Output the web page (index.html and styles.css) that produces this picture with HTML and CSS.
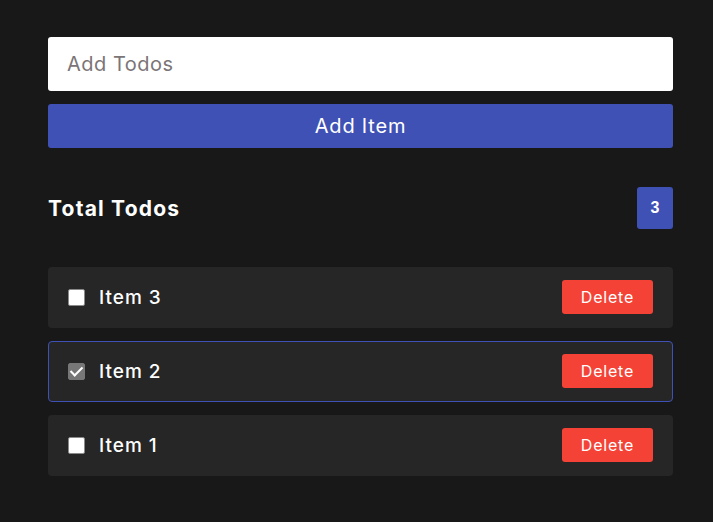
FILE: index.html
```html
<!DOCTYPE html>
<html>
<head>
<meta charset="utf-8">
<link rel="stylesheet" href="styles.css">
</head>
<body>
<main class="app">
  <input class="todo-input" type="text" placeholder="Add Todos">
  <button class="add-btn">Add Item</button>
  <div class="summary">
    <h2 class="summary-title">Total Todos</h2>
    <span class="badge">3</span>
  </div>
  <ul class="list">
    <li class="item">
      <label class="item-label"><input type="checkbox" class="check"><span>Item 3</span></label>
      <button class="del-btn">Delete</button>
    </li>
    <li class="item item-done">
      <label class="item-label"><input type="checkbox" class="check" checked><span>Item 2</span></label>
      <button class="del-btn">Delete</button>
    </li>
    <li class="item">
      <label class="item-label"><input type="checkbox" class="check"><span>Item 1</span></label>
      <button class="del-btn">Delete</button>
    </li>
  </ul>
</main>
</body>
</html>
```
FILE: styles.css
```css
* { box-sizing: border-box; }
html, body { margin: 0; padding: 0; background: #181818; }
body { font-family: "Inter", "Open Sans", sans-serif; color: #fff; }
.app {
  width: 625px;
  margin: 0 0 0 48px;
  padding-top: 37px;
  display: flex;
  flex-direction: column;
}
.todo-input {
  height: 54px;
  border: none;
  border-radius: 3px;
  background: #fff;
  padding: 0 19px;
  font-family: inherit;
  font-size: 20px;
  letter-spacing: 0.5px;
  color: #333;
  outline: none;
}
.todo-input::placeholder { color: #7b7577; }
.add-btn {
  margin-top: 13px;
  height: 44px;
  border: none;
  border-radius: 3px;
  background: #3f51b5;
  color: #fff;
  font-family: inherit;
  font-size: 20px;
  letter-spacing: 0.8px;
}
.summary {
  margin-top: 39px;
  display: flex;
  align-items: center;
  justify-content: space-between;
}
.summary-title { margin: 0; font-size: 21px; font-weight: 700; letter-spacing: 1.2px; }
.badge {
  width: 36px;
  height: 42px;
  border-radius: 3px;
  background: #3f51b5;
  display: flex;
  align-items: center;
  justify-content: center;
  font-family: "Liberation Sans", Arial, sans-serif;
  font-weight: 700;
  font-size: 16px;
}
.list {
  list-style: none;
  margin: 38px 0 0;
  padding: 0;
  display: flex;
  flex-direction: column;
  gap: 13.5px;
}
.item {
  height: 60.5px;
  background: #262626;
  border: 1px solid transparent;
  border-radius: 4px;
  display: flex;
  align-items: center;
  justify-content: space-between;
  padding: 0 19px 0 19px;
}
.item-done { border-color: #3f51b5; }
.item-label { display: flex; align-items: center; gap: 14px; font-size: 19px; font-weight: 500; letter-spacing: 1px; }
.check {
  appearance: none;
  -webkit-appearance: none;
  margin: 0;
  width: 17px;
  height: 17px;
  border-radius: 2px;
  background: #fff;
  border: 1px solid #8a8a8a;
  display: grid;
  place-items: center;
}
.check:checked { background: #777; border-color: #777; }
.check:checked::after {
  content: "";
  width: 5px;
  height: 10px;
  border: solid #fff;
  border-width: 0 2.5px 2.5px 0;
  transform: translate(0, -1px) rotate(45deg);
}
.del-btn {
  width: 91px;
  height: 34px;
  border: none;
  border-radius: 3px;
  background: #f44336;
  color: #fff;
  font-family: inherit;
  font-size: 16px;
  letter-spacing: 0.8px;
}
```
